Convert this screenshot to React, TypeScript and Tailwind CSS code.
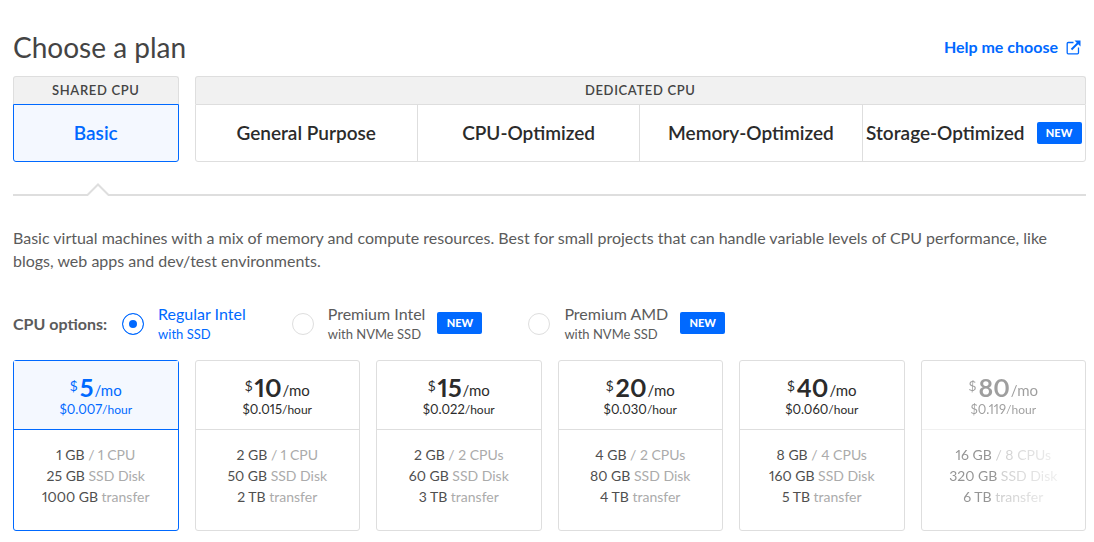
import { useState } from "react";

const dedicatedPlans = [
  { name: "General Purpose" },
  { name: "CPU-Optimized" },
  { name: "Memory-Optimized" },
  { name: "Storage-Optimized", isNew: true },
];

const cpuOptions = [
  { id: "regular-intel", name: "Regular Intel", detail: "with SSD", isNew: false },
  { id: "premium-intel", name: "Premium Intel", detail: "with NVMe SSD", isNew: true },
  { id: "premium-amd", name: "Premium AMD", detail: "with NVMe SSD", isNew: true },
];

const sizes = [
  { month: "5", hour: "0.007", memory: "1 GB", cpus: "1 CPU", disk: "25 GB", transfer: "1000 GB" },
  { month: "10", hour: "0.015", memory: "2 GB", cpus: "1 CPU", disk: "50 GB", transfer: "2 TB" },
  { month: "15", hour: "0.022", memory: "2 GB", cpus: "2 CPUs", disk: "60 GB", transfer: "3 TB" },
  { month: "20", hour: "0.030", memory: "4 GB", cpus: "2 CPUs", disk: "80 GB", transfer: "4 TB" },
  { month: "40", hour: "0.060", memory: "8 GB", cpus: "4 CPUs", disk: "160 GB", transfer: "5 TB" },
  { month: "80", hour: "0.119", memory: "16 GB", cpus: "8 CPUs", disk: "320 GB", transfer: "6 TB", faded: true },
];

function NewBadge() {
  return (
    <span className="flex h-[22px] w-[45px] shrink-0 items-center justify-center rounded-xs bg-[#0069ff] text-[11px] font-black text-white">
      NEW
    </span>
  );
}

function ExternalIcon() {
  return (
    <svg className="size-[15px]" viewBox="0 0 15 15" fill="none" stroke="currentColor" aria-hidden="true">
      <path d="M7.500 2.500H2.200a1 1 0 0 0-1 1v9.300a1 1 0 0 0 1 1h9.300a1 1 0 0 0 1-1V7.500" strokeWidth="1.300" />
      <path d="M5.500 9.500 12 3" strokeWidth="2" />
      <path d="M8.500 0.500H14.500V6.500Z" fill="currentColor" stroke="none" />
    </svg>
  );
}

function SizeCard({ size, selected, onSelect }: { size: (typeof sizes)[number]; selected: boolean; onSelect: () => void }) {
  const faded = size.faded && !selected;
  return (
    <button
      type="button"
      aria-pressed={selected}
      onClick={onSelect}
      className={`flex flex-col rounded-[3px] border text-center proportional-nums ${selected ? "border-[#0069ff]" : "border-[#dedede]"}`}
    >
      <span
        className={`flex h-[69px] w-full flex-col items-center border-b pt-3 ${
          selected ? "border-[#0069ff] bg-[#f4f8ff] text-[#0069ff]" : "border-[#dedede] text-[#2b2b2b]"
        } ${faded ? "opacity-45" : ""}`}
      >
        <span className="flex h-7 items-start">
          <span className="mr-0.5 text-sm leading-[26px]">$</span>
          <span className="text-[25px] leading-7 font-bold">{size.month}</span>
          <span className="ml-px text-[15px] leading-[34px]">/mo</span>
        </span>
        <span className="text-[13px] leading-4">
          ${size.hour}
          <span className="text-xs leading-4">/hour</span>
        </span>
      </span>
      <span
        className={`flex h-[100px] w-full flex-col pt-[14px] text-sm leading-[21px] text-[#ababab] ${
          faded ? "mask-r-from-45% mask-r-to-100% opacity-60" : ""
        }`}
      >
        <span><span className="text-[#4f4f4f]">{size.memory}</span> / {size.cpus}</span>
        <span><span className="text-[#4f4f4f]">{size.disk}</span> SSD Disk</span>
        <span><span className="text-[#4f4f4f]">{size.transfer}</span> transfer</span>
      </span>
    </button>
  );
}

export default function App() {
  const [cpu, setCpu] = useState("regular-intel");
  const [month, setMonth] = useState("5");

  return (
    <main className="bg-white pt-[31px] pr-2 pb-3 pl-[13px] font-['Lato',sans-serif] text-[#5b5b5b]">
      <header className="flex h-[45px] items-start justify-between">
        <h1 className="text-[28px] leading-8 text-[#444]">Choose a plan</h1>
        <a href="#help" className="mr-[5px] flex items-center gap-2 text-base leading-8 font-bold text-[#0069ff]">
          Help me choose
          <ExternalIcon />
        </a>
      </header>

      <div className="grid grid-cols-6 gap-4">
        <section>
          <h2 className="flex h-7 items-center justify-center rounded-t-[3px] border border-b-0 border-[#dedede] bg-[#f1f1f1] text-[13px] font-semibold tracking-wider text-[#444]">
            SHARED CPU
          </h2>
          <button type="button" aria-pressed="true" className="h-[58px] w-full rounded-b-[3px] border border-[#0069ff] bg-[#f4f8ff] text-[19px] leading-6 font-semibold text-[#0069ff]">
            Basic
          </button>
        </section>
        <section className="col-span-5">
          <h2 className="flex h-7 items-center justify-center rounded-t-[3px] border border-b-0 border-[#dedede] bg-[#f1f1f1] text-[13px] font-semibold tracking-wider text-[#444]">
            DEDICATED CPU
          </h2>
          <div className="grid h-[58px] grid-cols-4 divide-x divide-[#dedede] rounded-b-[3px] border border-[#dedede]">
            {dedicatedPlans.map((plan) => (
              <button key={plan.name} type="button" className="flex items-center justify-center gap-3 text-[19px] leading-6 font-semibold whitespace-nowrap text-[#2b2b2b]">
                {plan.name}
                {plan.isNew && <NewBadge />}
              </button>
            ))}
          </div>
        </section>
      </div>

      <div className="mt-5 flex items-end" aria-hidden="true">
        <span className="h-0.5 w-[74px] bg-[#dedede]" />
        <svg className="h-[14px] w-[22px]" viewBox="0 0 22 14" fill="none" stroke="#dedede" strokeWidth="2">
          <path d="M0 13h.500L11 2.500 21.500 13H22" />
        </svg>
        <span className="h-0.5 flex-1 bg-[#dedede]" />
      </div>

      <p className="mt-[30px] text-base leading-[23px]">
        Basic virtual machines with a mix of memory and compute resources. Best for small projects that can handle variable levels of CPU performance, like blogs, web apps and dev/test environments.
      </p>

      <div role="radiogroup" aria-labelledby="cpu-options" className="mt-8 flex h-10 items-center">
        <span id="cpu-options" className="mr-[15px] text-base font-bold">CPU options:</span>
        <div className="flex gap-[46px]">
          {cpuOptions.map((option) => (
            <label key={option.id} className="flex items-center">
              <input
                type="radio"
                name="cpu"
                value={option.id}
                checked={cpu === option.id}
                onChange={() => setCpu(option.id)}
                className="mr-[14px] size-[22px] appearance-none rounded-full border border-[#dedede] checked:border-[#0069ff] checked:bg-[#0069ff] checked:shadow-[inset_0_0_0_6px_white]"
              />
              <span className={`flex flex-col ${cpu === option.id ? "text-[#0069ff]" : ""}`}>
                <span className="text-base leading-5">{option.name}</span>
                <span className="text-[13px] leading-5">{option.detail}</span>
              </span>
              {option.isNew && <span className="mb-0.5 ml-3"><NewBadge /></span>}
            </label>
          ))}
        </div>
      </div>

      <div className="mt-4 grid grid-cols-6 gap-4">
        {sizes.map((size) => (
          <SizeCard key={size.month} size={size} selected={month === size.month} onSelect={() => setMonth(size.month)} />
        ))}
      </div>
    </main>
  );
}
